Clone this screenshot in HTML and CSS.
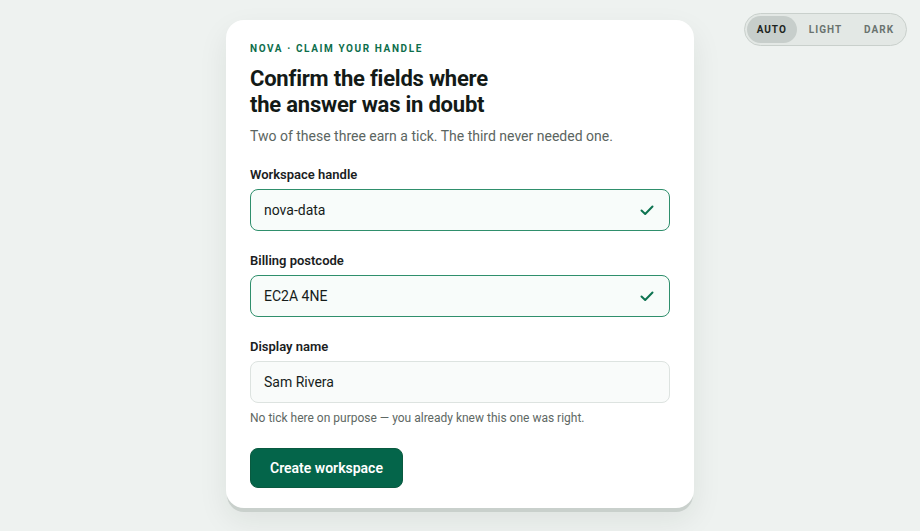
FILE: index.html
```html
<!DOCTYPE html>
<html lang="en">
<head>
<meta charset="utf-8">
<title>Nova · Claim your handle</title>
<link rel="stylesheet" href="styles.css">
</head>
<body>
<div class="theme-toggle">
  <span class="opt active">AUTO</span>
  <span class="opt">LIGHT</span>
  <span class="opt">DARK</span>
</div>
<main class="card">
  <p class="eyebrow">NOVA · CLAIM YOUR HANDLE</p>
  <h1 class="title">Confirm the fields where<br>the answer was in doubt</h1>
  <p class="lede">Two of these three earn a tick. The third never needed one.</p>

  <div class="field">
    <label class="label">Workspace handle</label>
    <div class="input valid">
      <span>nova-data</span>
      <svg class="tick" width="16" height="16" viewBox="0 0 16 16"><path d="M2.5 8.5 L6.2 12 L13.5 4.5" fill="none" stroke="#0d7350" stroke-width="2" stroke-linecap="round" stroke-linejoin="round"/></svg>
    </div>
  </div>

  <div class="field">
    <label class="label">Billing postcode</label>
    <div class="input valid">
      <span>EC2A 4NE</span>
      <svg class="tick" width="16" height="16" viewBox="0 0 16 16"><path d="M2.5 8.5 L6.2 12 L13.5 4.5" fill="none" stroke="#0d7350" stroke-width="2" stroke-linecap="round" stroke-linejoin="round"/></svg>
    </div>
  </div>

  <div class="field">
    <label class="label">Display name</label>
    <div class="input">
      <span>Sam Rivera</span>
    </div>
    <p class="hint">No tick here on purpose — you already knew this one was right.</p>
  </div>

  <button class="btn">Create workspace</button>
</main>
</body>
</html>
```

FILE: styles.css
```css
* { box-sizing: border-box; }
html, body { margin: 0; padding: 0; }
body {
  background: #eef2f0;
  font-family: Roboto, "Noto Sans", sans-serif;
  color: #161d1a;
  min-height: 531px;
  position: relative;
  padding-top: 20px;
}
.theme-toggle {
  position: absolute;
  top: 13px;
  right: 13px;
  display: flex;
  align-items: center;
  gap: 2px;
  padding: 2px;
  border: 1px solid #c9d0cc;
  border-radius: 999px;
  background: #e3e8e5;
}
.opt {
  font-size: 10px;
  font-weight: 700;
  letter-spacing: 0.1em;
  color: #6a736f;
  height: 27px;
  line-height: 27px;
  padding: 0 10px;
  border-radius: 999px;
}
.opt.active {
  background: #c7cecb;
  color: #1c2420;
}
.card {
  width: 468px;
  margin: 0 auto;
  background: #fff;
  border-radius: 18px;
  padding: 23px 24px 20px;
  box-shadow: 0 5px 0 -1px #c9d0cc, 0 12px 30px rgba(20, 40, 30, 0.08);
}
.eyebrow {
  margin: 0;
  font-size: 10px;
  font-weight: 700;
  letter-spacing: 0.16em;
  color: #0d6e4c;
  line-height: 12px;
}
.title {
  margin: 11px 0 0;
  font-size: 22px;
  font-weight: 700;
  line-height: 26px;
  letter-spacing: -0.01em;
  color: #131a17;
}
.lede {
  margin: 8px 0 0;
  font-size: 14px;
  line-height: 20px;
  color: #5b6561;
}
.field { margin-top: 21px; }
.field + .field { margin-top: 22px; }
.label {
  display: block;
  font-size: 13px;
  font-weight: 600;
  line-height: 16px;
  color: #1a211e;
}
.input {
  margin-top: 6px;
  height: 42px;
  display: flex;
  align-items: center;
  justify-content: space-between;
  padding: 0 14px 0 13px;
  border: 1px solid #dde3e0;
  border-radius: 8px;
  background: #f9fbfa;
  font-size: 14px;
  color: #161d1a;
}
.input.valid {
  border-color: #2f8f6c;
  background: #f8fcfa;
}
.tick { flex: none; }
.hint {
  margin: 7px 0 0;
  font-size: 12px;
  line-height: 16px;
  color: #5e6864;
}
.btn {
  margin-top: 22px;
  height: 40px;
  padding: 0 19px;
  border: 1px solid #0a5a40;
  border-radius: 8px;
  background: #04654a;
  color: #fff;
  font-family: Roboto, "Noto Sans", sans-serif;
  font-size: 14px;
  font-weight: 600;
  cursor: pointer;
  display: block;
}
```
